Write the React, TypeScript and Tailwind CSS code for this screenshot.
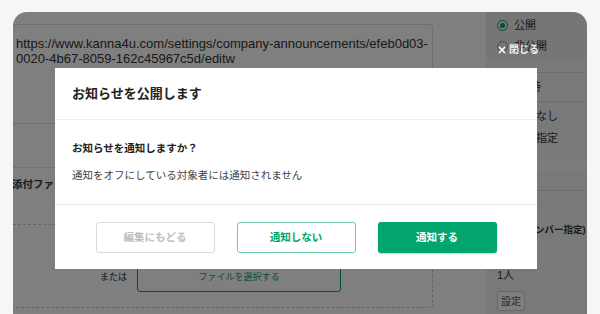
import { X } from 'lucide-react';

const font = "font-['Liberation_Sans','Noto_Sans_CJK_JP',sans-serif]";

const Radio = ({ checked, label }: { checked?: boolean; label: string }) => (
  <div className="flex items-center gap-[6px] h-[14px]">
    <span
      className={`w-[11px] h-[11px] rounded-full border-[1.5px] flex items-center justify-center ${
        checked ? 'border-[#02a56c]' : 'border-[#999]'
      }`}
    >
      {checked && <span className="w-[5px] h-[5px] rounded-full bg-[#02a56c]" />}
    </span>
    <span className="text-[11px] leading-[14px] text-[#333] whitespace-nowrap">{label}</span>
  </div>
);

const App = () => {
  return (
    <div className={`w-[600px] h-[314px] overflow-hidden bg-[#f7f6f4] pt-[12px] pl-[13px] pr-[13px] ${font}`}>
      <div className="relative h-[302px] rounded-t-[14px] bg-white overflow-hidden flex">
        {/* main column */}
        <main className="flex-1 flex flex-col pt-[12px] min-w-0">
          <div className="w-[420px] h-[100px] border border-l-0 border-[#dcdcdc] rounded-tr-[4px] pl-[3px] pt-[11px] text-[13px] leading-[15px] text-[#333] whitespace-nowrap">
            <div>https://www.kanna4u.com/settings/company-announcements/efeb0d03-</div>
            <div>0020-4b67-8059-162c45967c5d/editw</div>
          </div>
          <div className="mt-[43px] border-t border-[#e2e2e2] pt-[10px] -ml-[1px]">
            <div className="text-[10.5px] leading-[12px] font-bold text-[#333] whitespace-nowrap">添付ファイル</div>
          </div>
          <div className="mt-[34px] w-[420px] border border-l-0 border-dashed border-[#c8c8c8] rounded-br-[4px] pt-[39px] pb-[15px] pl-[87px] flex items-center gap-[10px]">
            <span className="text-[9px] text-[#333] whitespace-nowrap">または</span>
            <div className="w-[204px] h-[28px] border border-[#02a56c] rounded-[3px] flex items-center justify-center text-[9px] text-[#02a56c]">
              ファイルを選択する
            </div>
          </div>
        </main>

        {/* sidebar */}
        <aside className="w-[101px] shrink-0 bg-[#f3f3f3] flex flex-col">
          <div className="h-[50px] bg-[#ececec] rounded-bl-[8px] pl-[11px] pt-[6px] flex flex-col gap-[7px]">
            <Radio checked label="公開" />
            <Radio label="非公開" />
          </div>
          <div className="mt-[10px] h-[29px] border-t border-[#dddddd] pl-[11px] flex items-center text-[11px] text-[#333] whitespace-nowrap">
            公開日時
          </div>
          <div className="h-[89px] border-t border-[#dddddd] pl-[11px] pt-[7px] flex flex-col gap-[8px]">
            <Radio label="通知なし" />
            <Radio label="日時指定" />
            <div className="mt-[8px] -ml-[11px] h-[10px] bg-[#f8f8f8]" />
          </div>
          <div className="border-t border-[#dddddd] pl-[11px] pt-[32px]">
            <div className="text-[9.5px] leading-[14px] font-bold text-[#333] whitespace-nowrap">宛先（メンバー指定)</div>
            <div className="mt-[31px] text-[11px] leading-[14px] text-[#333]">1人</div>
            <div className="mt-[9px] w-[28px] h-[20px] border border-[#cfcfcf] rounded-[3px] bg-white flex items-center justify-center text-[10px] text-[#555]">
              設定
            </div>
          </div>
        </aside>

        {/* backdrop */}
        <div className="absolute inset-0 bg-black/50" />

        {/* close */}
        <div className="absolute left-[484px] top-[31px] flex items-center gap-[2px] text-white">
          <X className="w-[10px] h-[10px]" strokeWidth={4} />
          <span className="text-[10px] leading-[14px] font-bold text-white/90">閉じる</span>
        </div>

        {/* modal */}
        <div className="absolute left-[42px] top-[56px] w-[482px] bg-white">
          <div className="h-[52px] border-b border-[#eeeeee] pl-[17px] flex items-center">
            <h2 className="text-[13px] font-bold text-[#222]">お知らせを公開します</h2>
          </div>
          <div className="pl-[17px] pt-[20px] pb-[21px] border-b border-[#e8e8e8]">
            <p className="text-[10.5px] leading-[16px] font-bold text-[#222]">お知らせを通知しますか？</p>
            <p className="mt-[11px] text-[10.5px] leading-[16px] text-[#444]">
              通知をオフにしている対象者には通知されません
            </p>
          </div>
          <div className="pt-[17px] pb-[16px] flex justify-center gap-[22px]">
            <button className="w-[119px] h-[31px] rounded-[3px] border border-[#d9d9d9] bg-white text-[10.5px] font-bold text-[#bdbdbd]">
              編集にもどる
            </button>
            <button className="w-[119px] h-[31px] rounded-[3px] border border-[#6fcba4] bg-white text-[10.5px] font-bold text-[#02a56c]">
              通知しない
            </button>
            <button className="w-[119px] h-[31px] rounded-[3px] bg-[#02a56c] shadow-[0_1px_2px_rgba(0,0,0,0.2)] text-[10.5px] font-bold text-white">
              通知する
            </button>
          </div>
        </div>
      </div>
    </div>
  );
};

export default App;
